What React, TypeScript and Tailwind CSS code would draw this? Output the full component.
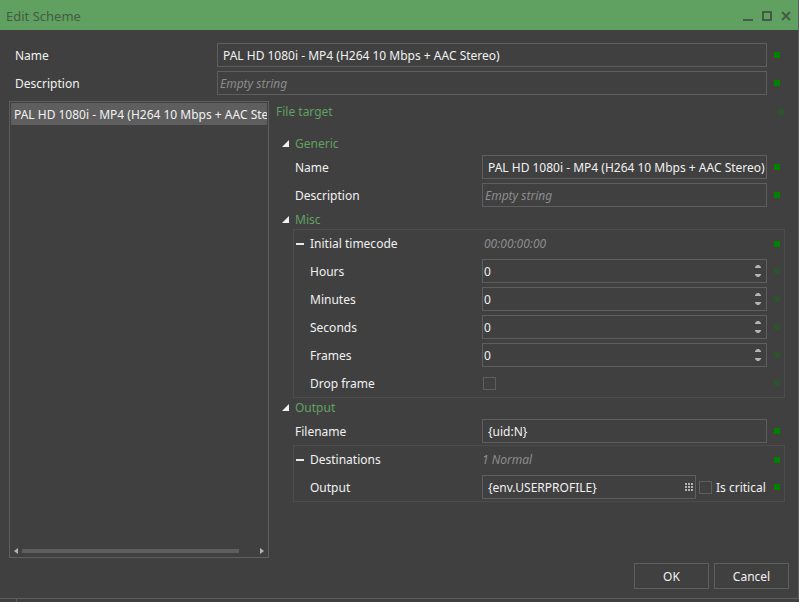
import { useId, useState } from "react"
import type { ReactNode } from "react"
import clsx from "clsx"

const SCHEME_NAME = "PAL HD 1080i - MP4 (H264 10 Mbps + AAC Stereo)"

const fieldClass =
  "h-6 w-full min-w-0 border border-[#5e5e5e] bg-transparent text-[#f1f1f1] outline-none placeholder:italic placeholder:text-[#8c8c8c] focus:border-[#60a060]"

function Marker({ dim = false }: { dim?: boolean }) {
  return <span className={clsx("size-1.5 shrink-0", dim ? "bg-[#2d532d]" : "bg-[#008000]")} />
}

function TextField({ id, value = "", placeholder }: { id: string; value?: string; placeholder?: string }) {
  const [text, setText] = useState(value)

  return (
    <input
      id={id}
      type="text"
      value={text}
      placeholder={placeholder}
      onChange={(e) => setText(e.target.value)}
      className={clsx(fieldClass, text ? "pl-[5px]" : "pl-0.5")}
    />
  )
}

function NumberField({ id }: { id: string }) {
  const [value, setValue] = useState(0)

  return (
    <div className="flex h-6 w-full border border-[#5e5e5e]">
      <input
        id={id}
        type="text"
        inputMode="numeric"
        value={value}
        onChange={(e) => setValue(Number(e.target.value) || 0)}
        className="min-w-0 flex-1 bg-transparent px-px pt-0.5 text-[#f1f1f1] outline-none"
      />
      <div className="flex w-4 flex-col items-center justify-center gap-1.5">
        <button type="button" aria-label="Increase" onClick={() => setValue(value + 1)}>
          <svg className="block" width="6" height="3" viewBox="0 0 6 3" fill="#b4b4b4">
            <path d="M0 3V2L2 0h2l2 2v1z" />
          </svg>
        </button>
        <button type="button" aria-label="Decrease" onClick={() => setValue(Math.max(0, value - 1))}>
          <svg className="block" width="6" height="3" viewBox="0 0 6 3" fill="#b4b4b4">
            <path d="M0 0v1l2 2h2l2-2V0z" />
          </svg>
        </button>
      </div>
    </div>
  )
}

function CheckBox({ id }: { id: string }) {
  return (
    <input
      id={id}
      type="checkbox"
      className="size-[13px] shrink-0 appearance-none border border-[#5e5e5e] checked:bg-[#60a060]"
    />
  )
}

function Row({
  label,
  nested = false,
  dim = false,
  children,
}: {
  label: string
  nested?: boolean
  dim?: boolean
  children: (id: string) => ReactNode
}) {
  const id = useId()

  return (
    <div className="flex h-7 items-center pr-1">
      <label htmlFor={id} className={clsx("w-[188px] shrink-0 pt-0.5", nested ? "pl-4" : "pl-px")}>
        {label}
      </label>
      <div className="mr-[7px] flex min-w-0 flex-1 items-center">{children(id)}</div>
      <Marker dim={dim} />
    </div>
  )
}

function Group({ label, summary, children }: { label: string; summary: ReactNode; children: ReactNode }) {
  const [open, setOpen] = useState(true)

  return (
    <div className="border border-[#4c4c4c]">
      <div className="flex h-[27px] items-center pr-1">
        <button type="button" onClick={() => setOpen(!open)} className="flex w-[188px] shrink-0 items-center gap-1.5 pl-0.5">
          <svg width="8" height="8" viewBox="0 0 8 8" fill="#e8e8e8">
            <path d="M0 3h8v2H0z" />
            {!open && <path d="M3 0h2v8H3z" />}
          </svg>
          <span>{label}</span>
        </button>
        <div className="mr-[7px] min-w-0 flex-1 italic text-[#8c8c8c]">{summary}</div>
        <Marker />
      </div>
      {open && children}
    </div>
  )
}

function Section({ title, children }: { title: string; children: ReactNode }) {
  const [open, setOpen] = useState(true)

  return (
    <section className="pl-[17px]">
      <button type="button" onClick={() => setOpen(!open)} className="-ml-[11px] flex h-[19px] items-center gap-1.5 text-[#60a060]">
        <svg width="7" height="7" viewBox="0 0 7 7" fill="#f1f1f1">
          <path d={open ? "M7 0v7H0z" : "M1 0l5 3.5L1 7z"} />
        </svg>
        <span>{title}</span>
      </button>
      {open && children}
    </section>
  )
}

function TitleBar() {
  return (
    <header className="flex h-[30px] items-center justify-between bg-[#60a060] pl-1.5 pr-[7px] pt-0.5 text-[#445c44]">
      <h1 className="pt-0.5 text-[13px]">Edit Scheme</h1>
      <div className="flex items-center gap-[9px]">
        <button type="button" aria-label="Minimize">
          <svg className="block" width="10" height="10" viewBox="0 0 10 10" fill="currentColor">
            <path d="M0 8h10v2H0z" />
          </svg>
        </button>
        <button type="button" aria-label="Maximize">
          <svg className="block" width="10" height="10" viewBox="0 0 10 10" fill="none" stroke="currentColor" strokeWidth="2">
            <path d="M1 1h8v8H1z" />
          </svg>
        </button>
        <button type="button" aria-label="Close">
          <svg className="block" width="10" height="10" viewBox="0 0 10 10" fill="none" stroke="currentColor" strokeWidth="2">
            <path d="M1 1l8 8M9 1l-8 8" />
          </svg>
        </button>
      </div>
    </header>
  )
}

function TargetList() {
  return (
    <div className="flex w-[260px] shrink-0 flex-col justify-between border border-[#5e5e5e] p-px">
      <ul>
        <li>
          <button type="button" className="block h-[22px] w-full overflow-hidden whitespace-nowrap bg-[#5e5e5e] pl-[3px] pt-0.5 text-left">
            {SCHEME_NAME}
          </button>
        </li>
      </ul>
      <div className="flex h-2.5 items-center gap-[7px] px-[3px]">
        <div className="flex flex-1 items-center gap-1">
          <svg width="4" height="6" viewBox="0 0 4 6" fill="#b4b4b4">
            <path d="M4 0v6L0 3z" />
          </svg>
          <div className="h-1 w-[217px] bg-[#5e5e5e]" />
        </div>
        <svg width="4" height="6" viewBox="0 0 4 6" fill="#b4b4b4">
          <path d="M0 0v6l4-3z" />
        </svg>
      </div>
    </div>
  )
}

function TargetProperties() {
  return (
    <div className="min-w-0 flex-1 pl-[7px] pr-[13px]">
      <div className="mb-[11px] flex h-[22px] items-center justify-between pr-px text-[#60a060]">
        <h2>File target</h2>
        <Marker dim />
      </div>

      <Section title="Generic">
        <div className="px-px pb-px">
          <Row label="Name">{(id) => <TextField id={id} value={SCHEME_NAME} />}</Row>
          <Row label="Description">{(id) => <TextField id={id} placeholder="Empty string" />}</Row>
        </div>
      </Section>

      <Section title="Misc">
        <Group label="Initial timecode" summary={<span className="pl-0.5">00:00:00:00</span>}>
          {["Hours", "Minutes", "Seconds", "Frames"].map((unit) => (
            <Row key={unit} label={unit} nested dim>
              {(id) => <NumberField id={id} />}
            </Row>
          ))}
          <Row label="Drop frame" nested dim>
            {(id) => (
              <div className="flex pl-px">
                <CheckBox id={id} />
              </div>
            )}
          </Row>
        </Group>
      </Section>

      <Section title="Output">
        <div className="px-px">
          <Row label="Filename">{(id) => <TextField id={id} value="{uid:N}" />}</Row>
        </div>
        <Group label="Destinations" summary="1 Normal">
          <Row label="Output" nested>
            {(id) => (
              <>
                <div className="mr-[3px] flex h-6 min-w-0 flex-1 items-center border border-[#5e5e5e] pr-0.5">
                  <input
                    id={id}
                    type="text"
                    defaultValue="{env.USERPROFILE}"
                    className="min-w-0 flex-1 bg-transparent pl-[5px] pt-0.5 text-[#f1f1f1] outline-none"
                  />
                  <button type="button" aria-label="Browse">
                    <svg className="block" width="8" height="8" viewBox="0 0 8 8" fill="#b4b4b4">
                      <path d="M0 0h2v2H0zM3 0h2v2H3zM6 0h2v2H6zM0 3h2v2H0zM3 3h2v2H3zM6 3h2v2H6zM0 6h2v2H0zM3 6h2v2H3zM6 6h2v2H6z" />
                    </svg>
                  </button>
                </div>
                <CheckBox id="is-critical" />
                <label htmlFor="is-critical" className="w-[55px] whitespace-nowrap pl-1 pt-0.5">
                  Is critical
                </label>
              </>
            )}
          </Row>
        </Group>
      </Section>
    </div>
  )
}

export default function App() {
  return (
    <div className="flex min-h-screen flex-col bg-[#403e3f] font-['Noto_Sans','Open_Sans',sans-serif] text-xs text-[#f1f1f1]">
      <div className="flex flex-1 flex-col border-b border-r border-[#5e5e5e] bg-[#404040]">
        <TitleBar />

        <div className="pb-1 pl-[15px] pr-[18px] pt-[11px]">
          <div className="flex h-7 items-center">
            <label htmlFor="scheme-name" className="w-[202px] shrink-0 pt-0.5">
              Name
            </label>
            <TextField id="scheme-name" value={SCHEME_NAME} />
            <span className="w-[7px] shrink-0" />
            <Marker />
          </div>
          <div className="flex h-7 items-center">
            <label htmlFor="scheme-description" className="w-[202px] shrink-0 pt-0.5">
              Description
            </label>
            <TextField id="scheme-description" placeholder="Empty string" />
            <span className="w-[7px] shrink-0" />
            <Marker />
          </div>
        </div>

        <main className="flex flex-1 pl-[9px]">
          <TargetList />
          <TargetProperties />
        </main>

        <footer className="flex justify-end gap-[5px] pb-[9px] pr-[9px] pt-[5px]">
          <button type="button" className="h-[26px] w-[75px] border border-[#5e5e5e] pt-0.5 hover:bg-[#5e5e5e]">
            OK
          </button>
          <button type="button" className="h-[26px] w-[75px] border border-[#5e5e5e] pt-0.5 hover:bg-[#5e5e5e]">
            Cancel
          </button>
        </footer>
      </div>
      <div className="flex h-[3px] pl-4">
        <span className="w-px bg-[#5e5e5e]" />
      </div>
    </div>
  )
}
